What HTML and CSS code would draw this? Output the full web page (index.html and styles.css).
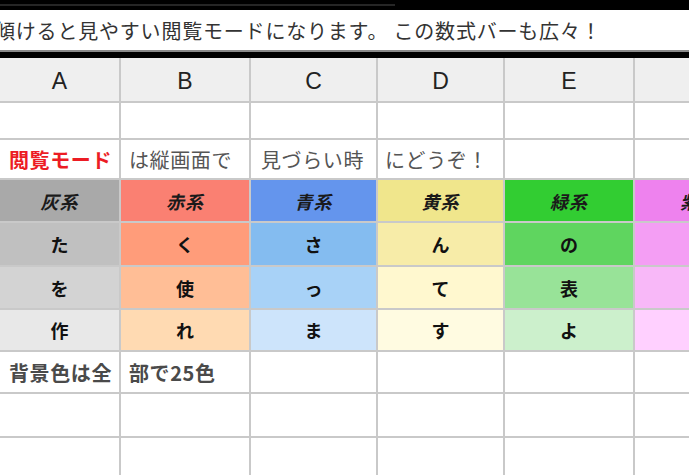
FILE: index.html
```html
<!DOCTYPE html>
<html lang="ja">
<head>
    <meta charset="UTF-8">
    <meta name="viewport" content="width=device-width, initial-scale=1.0">
    <title>閲覧モード</title>
    <link rel="stylesheet" href="styles.css">
</head>
<body>
    <!-- 上部ツールバーの端 -->
    <div class="top-bar">
        <div class="top-bar-edge"></div>
    </div>

    <!-- 数式バー -->
    <div class="formula-bar">
        <span class="formula-text">傾けると見やすい閲覧モードになります。 この数式バーも広々！</span>
    </div>

    <!-- シート -->
    <div class="sheet">
        <!-- 列見出し -->
        <div class="col-head">A</div>
        <div class="col-head">B</div>
        <div class="col-head">C</div>
        <div class="col-head">D</div>
        <div class="col-head">E</div>
        <div class="col-head">F</div>

        <!-- 1行目 -->
        <div class="cell"></div>
        <div class="cell"></div>
        <div class="cell"></div>
        <div class="cell"></div>
        <div class="cell"></div>
        <div class="cell"></div>

        <!-- 2行目 -->
        <div class="cell note red">閲覧モード</div>
        <div class="cell note pad-b">は縦画面で</div>
        <div class="cell note pad-c">見づらい時</div>
        <div class="cell note pad-d">にどうぞ！</div>
        <div class="cell"></div>
        <div class="cell"></div>

        <!-- 3行目：色見出し -->
        <div class="cell head gray-1">灰系</div>
        <div class="cell head red-1">赤系</div>
        <div class="cell head blue-1">青系</div>
        <div class="cell head yellow-1">黄系</div>
        <div class="cell head green-1">緑系</div>
        <div class="cell head pink-1">紫系</div>

        <!-- 4行目 -->
        <div class="cell mark gray-2">た</div>
        <div class="cell mark red-2">く</div>
        <div class="cell mark blue-2">さ</div>
        <div class="cell mark yellow-2">ん</div>
        <div class="cell mark green-2">の</div>
        <div class="cell mark pink-2">色</div>

        <!-- 5行目 -->
        <div class="cell mark gray-3">を</div>
        <div class="cell mark red-3">使</div>
        <div class="cell mark blue-3">っ</div>
        <div class="cell mark yellow-3">て</div>
        <div class="cell mark green-3">表</div>
        <div class="cell mark pink-3">を</div>

        <!-- 6行目 -->
        <div class="cell mark gray-4">作</div>
        <div class="cell mark red-4">れ</div>
        <div class="cell mark blue-4">ま</div>
        <div class="cell mark yellow-4">す</div>
        <div class="cell mark green-4">よ</div>
        <div class="cell mark pink-4"></div>

        <!-- 7行目 -->
        <div class="cell note dark">背景色は全</div>
        <div class="cell note dark pad-b">部で25色</div>
        <div class="cell"></div>
        <div class="cell"></div>
        <div class="cell"></div>
        <div class="cell"></div>

        <!-- 8行目 -->
        <div class="cell"></div>
        <div class="cell"></div>
        <div class="cell"></div>
        <div class="cell"></div>
        <div class="cell"></div>
        <div class="cell"></div>

        <!-- 9行目 -->
        <div class="cell"></div>
        <div class="cell"></div>
        <div class="cell"></div>
        <div class="cell"></div>
        <div class="cell"></div>
        <div class="cell"></div>
    </div>
</body>
</html>
```

FILE: styles.css
```css
/* スプレッドシート閲覧モード */
body {
    margin: 0;
    background-color: #000;
    font-family: "Noto Sans CJK JP", sans-serif;
    overflow: hidden;
    width: 689px;
    height: 475px;
}

.top-bar {
    height: 10px;
    overflow: hidden;
}

.top-bar-edge {
    width: 395px;
    height: 2px;
    margin-top: 4px;
    background-color: #262626;
}

/* 数式バー */
.formula-bar {
    height: 40px;
    background-color: #fff;
    border-bottom: 2px solid #8a8a8a;
    display: flex;
    align-items: center;
    overflow: hidden;
    white-space: nowrap;
}

.formula-text {
    margin-left: -5px;
    font-size: 20px;
    letter-spacing: 0.8px;
    color: #333;
}

/* シート本体：隙間がそのまま罫線になる */
.sheet {
    margin-top: 6px;
    display: grid;
    grid-template-columns: 119px 128px 125px 125px 128px 128px;
    grid-template-rows: 43px 35px 38px 41px 42px 41px 40px 40px 42px 42px;
    gap: 2px;
    background-color: #c9c9c9;
    width: 763px;
}

.col-head {
    background-color: #efefef;
    font-family: "Liberation Sans", Arial, sans-serif;
    font-size: 23px;
    color: #222;
    display: flex;
    align-items: center;
    justify-content: center;
    padding-top: 4px;
}

.cell {
    background-color: #fff;
    display: flex;
    align-items: center;
    overflow: hidden;
    white-space: nowrap;
}

.note {
    font-size: 20px;
    letter-spacing: 0.6px;
    color: #555;
    padding-left: 9px;
}

.note.red {
    color: #ec1c24;
    font-weight: bold;
}

.note.dark {
    color: #4a4a4a;
    font-weight: bold;
}

.pad-b { padding-left: 8px; }
.pad-c { padding-left: 10px; }
.pad-d { padding-left: 7px; }

.head {
    justify-content: center;
    font-size: 18px;
    font-weight: bold;
    font-style: italic;
    letter-spacing: 1px;
    color: #1a1a1a;
}

.mark {
    justify-content: center;
    font-size: 18px;
    font-weight: bold;
    color: #111;
}

/* 25色の背景 */
.gray-1 { background-color: #a9a9a9; }
.gray-2 { background-color: #c0c0c0; }
.gray-3 { background-color: #d3d3d3; }
.gray-4 { background-color: #e8e8e8; }

.red-1 { background-color: #fa8072; }
.red-2 { background-color: #ff9c7a; }
.red-3 { background-color: #ffbe96; }
.red-4 { background-color: #ffdab2; }

.blue-1 { background-color: #6495ed; }
.blue-2 { background-color: #84bcf0; }
.blue-3 { background-color: #a8d2f7; }
.blue-4 { background-color: #cde4fb; }

.yellow-1 { background-color: #f0e68c; }
.yellow-2 { background-color: #f7eca8; }
.yellow-3 { background-color: #fff8cf; }
.yellow-4 { background-color: #fffbe1; }

.green-1 { background-color: #32cd32; }
.green-2 { background-color: #5fd55f; }
.green-3 { background-color: #98e398; }
.green-4 { background-color: #ccf0cc; }

.pink-1 { background-color: #ee82ee; }
.pink-2 { background-color: #f49ef4; }
.pink-3 { background-color: #f8b8f8; }
.pink-4 { background-color: #ffd0ff; }
```
